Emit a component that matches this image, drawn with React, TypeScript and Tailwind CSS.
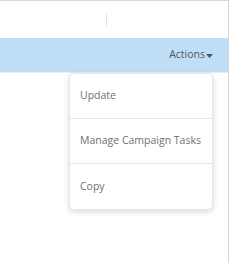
import React from 'react';

const menuItems = ['Update', 'Manage Campaign Tasks', 'Copy'];

const App = () => {
  return (
    <div className="w-[250px] h-[263px] bg-white overflow-hidden" style={{ fontFamily: '"Open Sans", sans-serif' }}>
      <div className="w-[229px] h-[263px] border-r border-[#d4d4d4] flex flex-col">
        {/* top toolbar */}
        <div className="h-[38px] border-t border-[#d8d8d8] flex items-center pl-[106px]">
          <div className="w-px h-[12px] bg-[#e2e2e2]" />
        </div>

        {/* header row */}
        <div className="h-[34px] bg-[#bfdff8] flex items-center justify-end pr-[15px] text-[10.5px] text-[#555]">
          <span>Actions</span>
          <svg width="7" height="4" viewBox="0 0 7 4" className="ml-[1px] mt-[2px]">
            <path d="M0 0h7L3.5 4z" fill="#555" />
          </svg>
        </div>

        <div className="relative flex-1 border-t border-[#ececec]">
          {/* dropdown menu */}
          <div className="absolute left-[69px] top-0 w-[144px] bg-white rounded-[5px] border border-[#e6e6e6] shadow-[0_2px_6px_rgba(0,0,0,0.15)]">
            {menuItems.map((item, i) => (
              <div
                key={item}
                className={`h-[45px] flex items-center pl-[10px] text-[10.5px] text-[#707070] whitespace-nowrap ${i < menuItems.length - 1 ? 'border-b border-[#e4e4e4]' : ''}`}
              >
                {item}
              </div>
            ))}
          </div>
        </div>
      </div>
    </div>
  );
};

export default App;
